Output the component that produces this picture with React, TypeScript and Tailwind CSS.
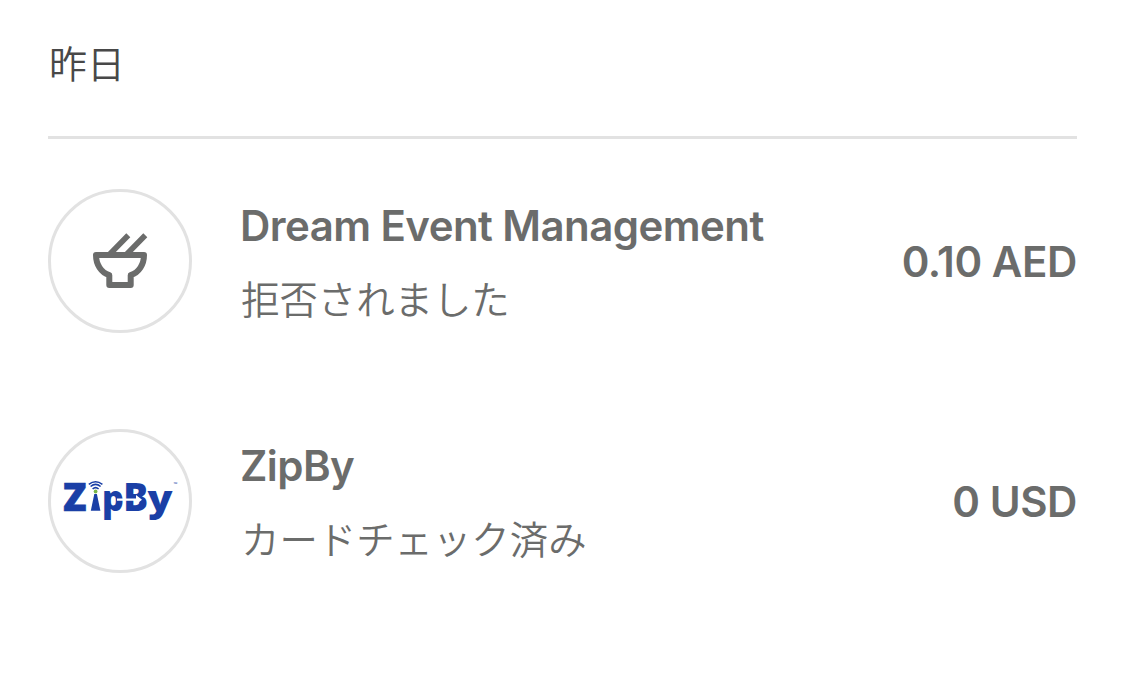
import type { ReactNode } from "react";

function BowlIcon() {
    return (
        <svg viewBox="0 0 60 60" className="h-[60px] w-[60px]" fill="none" stroke="#6b6c6b" strokeWidth="6">
            <path d="M18.5 24.5 38.3 4.2M35.5 24.5 55.3 4.2" strokeWidth="5.6" />
            <path
                d="M6 24h48c0 9.500-5 17.300-13.300 20.200V54H19.300v-9.800C11 41.300 6 33.500 6 24Z"
                strokeLinejoin="round"
            />
        </svg>
    );
}

function ZipByLogo() {
    return (
        <svg
            viewBox="0 -20 126 90"
            className="h-[90px] w-[126px] shrink-0 font-['Open_Sans',sans-serif] font-extrabold"
            fill="#1a3fa6"
        >
            <text transform="translate(6 34.5)" fontSize="38.5" stroke="#1a3fa6" strokeWidth="0.6">Z</text>
            {/* antenna that stands in for the letter i */}
            <path d="M37.300 18h2.600L43.400 34.800H33.800Z" />
            <circle cx="38.600" cy="15.500" r="1.900" fill="#7ab648" />
            <path
                d="M35.600 13q3-2.600 6 0M33.600 10.500q5-4.300 10 0M31.800 8.300q6.800-5 13.600 0"
                fill="none"
                stroke="#1a3fa6"
                strokeWidth="1.6"
            />
            <text transform="translate(45 34.5) scale(.96 1)" fontSize="35.5">p</text>
            <text transform="translate(66.3 34.5) scale(.95 1)" fontSize="39">B</text>
            <text transform="translate(90.5 34.5) scale(1.14 1)" fontSize="36">y</text>
            {/* arrow cut through the p and the B */}
            <path d="M60 22.400h19v-3.400l6 4.700-6 4.900v-3.900H60Z" fill="white" />
            <text x="116.5" y="10" fontSize="5" fontWeight="600">™</text>
        </svg>
    );
}

type Transaction = {
    id: number;
    name: string;
    status: string;
    amount: string;
    icon: ReactNode;
};

const TRANSACTIONS: Transaction[] = [
    { id: 1, name: "Dream Event Management", status: "拒否されました", amount: "0.10 AED", icon: <BowlIcon /> },
    { id: 2, name: "ZipBy", status: "カードチェック済み", amount: "0 USD", icon: <ZipByLogo /> },
];

export default function App() {
    return (
        <div className="h-[687px] overflow-hidden bg-white px-12 font-['Inter','Noto_Sans_CJK_JP',sans-serif]">
            <h2 className="flex h-[139px] items-start border-b-3 border-[#e2e2e2] pt-9 pl-px text-[38px] leading-[56px] font-[350] text-[#484848]">
                昨日
            </h2>

            <ul className="flex flex-col gap-24 pt-[50px]">
                {TRANSACTIONS.map((item) => (
                    <li key={item.id} className="flex h-36 items-center text-[#6b6c6b]">
                        <div className="flex size-36 shrink-0 items-center justify-center rounded-full border-3 border-[#e2e2e2]">
                            {item.icon}
                        </div>
                        <div className="ml-12 flex-1 pt-1">
                            <div className="text-[42px] leading-[56px] font-semibold tracking-[-0.56px]">{item.name}</div>
                            <div className="mt-[18px] pl-px text-[38.4px] leading-[56px] font-[350]">{item.status}</div>
                        </div>
                        <div className="pt-0.5 text-[42px] leading-[56px] font-semibold tracking-[-0.4px]">{item.amount}</div>
                    </li>
                ))}
            </ul>
        </div>
    );
}
